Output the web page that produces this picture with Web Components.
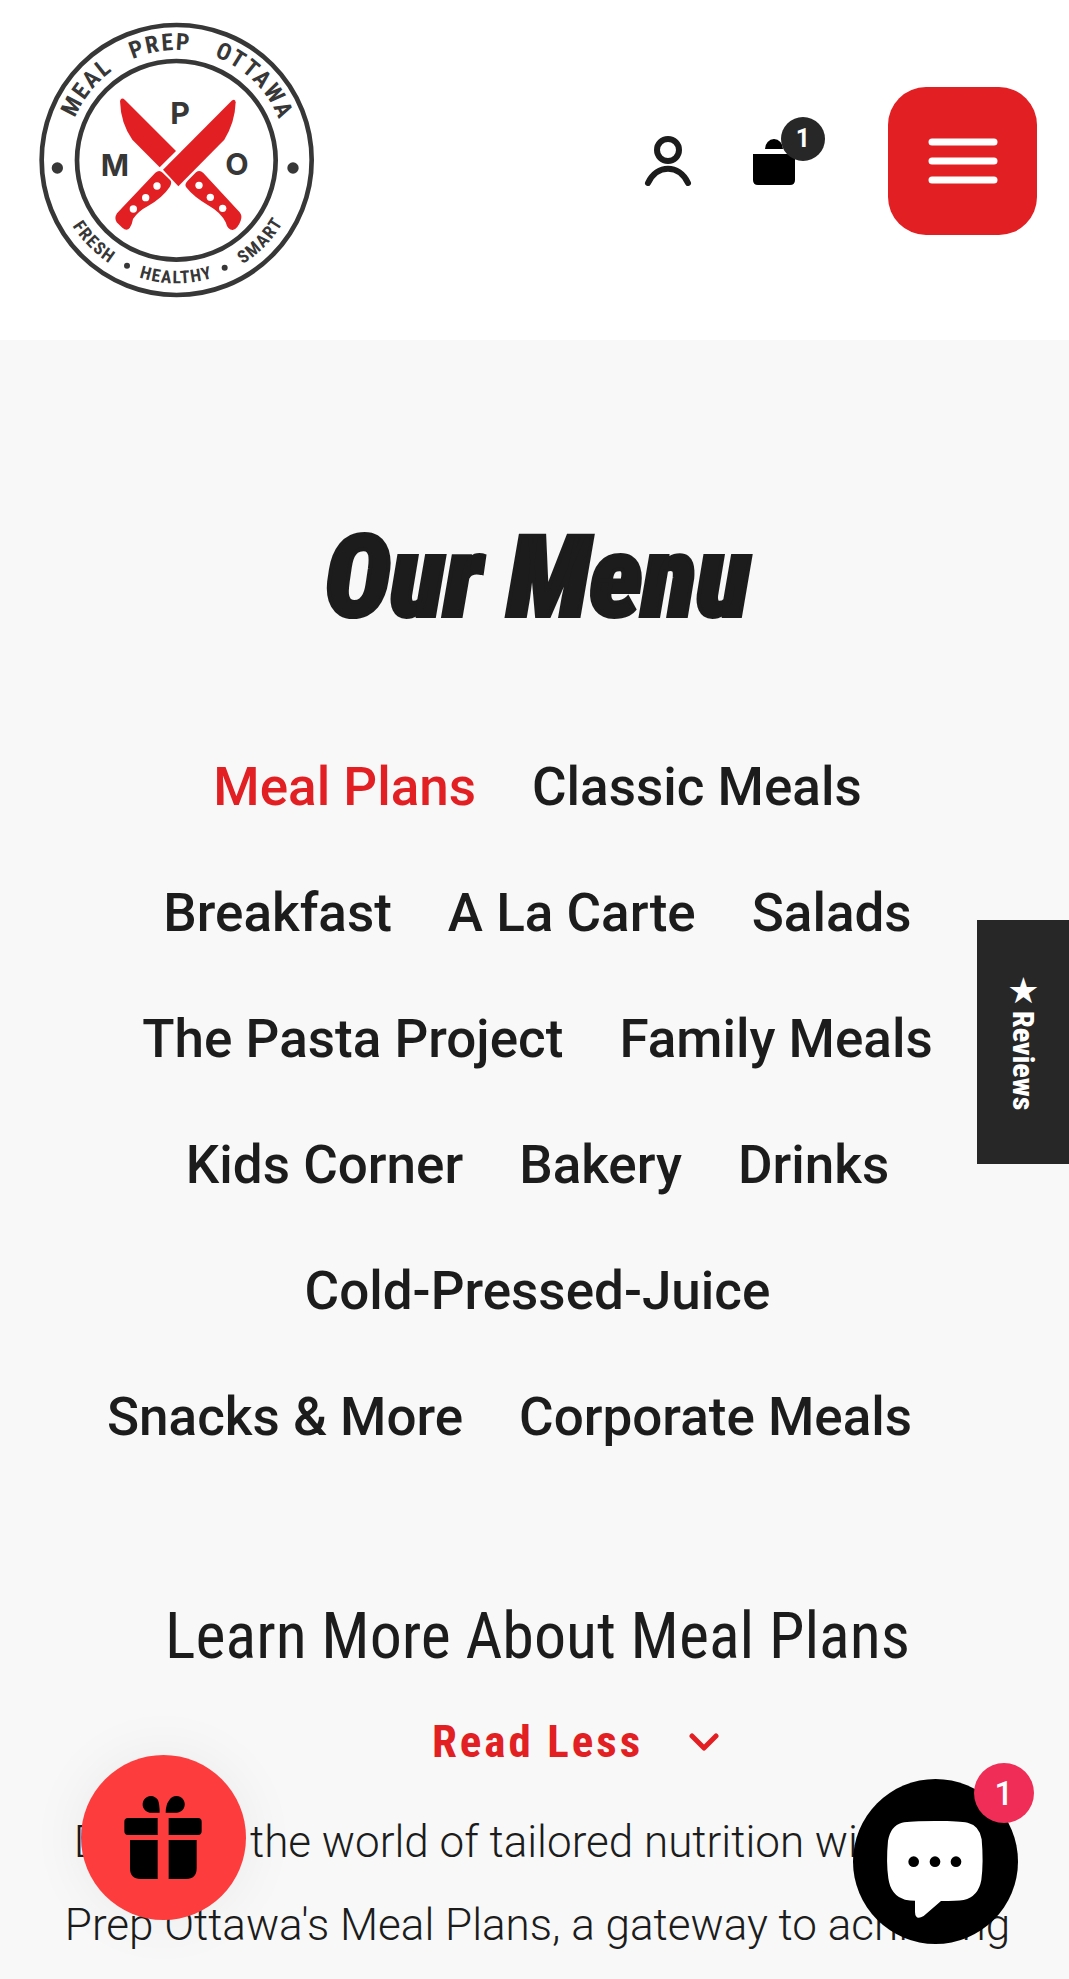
<!DOCTYPE html>
<html lang="en">
<head>
<meta charset="utf-8">
<meta name="viewport" content="width=device-width, initial-scale=1">
<title>Our Menu - Meal Prep Ottawa</title>
<style>
:root{--red:#e21f23;--ink:#1c1c1c;--dark:#272727;--narrow:"Roboto Condensed","Liberation Sans Narrow","Liberation Sans",sans-serif}
body{margin:0;background:#f8f8f8;color:var(--ink);font-family:Roboto,sans-serif}
</style>
</head>
<body>
<menu-page></menu-page>
<script>
const define = (name, html) => {
  const template = document.createElement('template');
  template.innerHTML = '<style>*{box-sizing:border-box}a{color:inherit;text-decoration:none}button{border:0;padding:0;font:inherit;cursor:pointer}svg{display:block}</style>' + html;
  customElements.define(name, class extends HTMLElement {
    constructor() {
      super();
      this.attachShadow({mode: 'open'}).append(template.content.cloneNode(true));
    }
  });
};

define('brand-logo', `
<style>
:host{display:block}
svg{width:295px;height:295px}
text{font-family:var(--narrow);font-weight:700;fill:#373737}
.top{font-size:71px;letter-spacing:6px}
.bottom{font-size:53px;letter-spacing:4px}
.initial{font-family:Inter,sans-serif;font-size:91px}
</style>
<a href="#" aria-label="Meal Prep Ottawa home">
<svg viewBox="0 0 885 885">
<defs>
<path id="up" d="M110 435A330 330 0 0 1 770 435"/>
<path id="down" d="M70 435A370 370 0 0 0 810 435"/>
</defs>
<g fill="none" stroke="#373737" stroke-width="14"><circle cx="440" cy="435" r="405"/><circle cx="439" cy="436" r="298"/></g>
<g fill="#373737"><circle cx="82" cy="459" r="17"/><circle cx="789" cy="459" r="17"/><circle cx="291" cy="752" r="9"/><circle cx="584" cy="758" r="9"/></g>
<g text-anchor="middle">
<text class="top"><textPath href="#up" startOffset="21.5%">MEAL</textPath></text>
<text class="top"><textPath href="#up" startOffset="45.5%">PREP</textPath></text>
<text class="top"><textPath href="#up" startOffset="74.8%">OTTAWA</textPath></text>
<text class="bottom"><textPath href="#down" startOffset="24.9%">FRESH</textPath></text>
<text class="bottom"><textPath href="#down" startOffset="49.9%">HEALTHY</textPath></text>
<text class="bottom"><textPath href="#down" startOffset="75.6%">SMART</textPath></text>
<text class="initial" x="450" y="328">P</text>
<text class="initial" x="255" y="483">M</text>
<text class="initial" x="621" y="480">O</text>
</g>
<g fill="#e21f23">
<path d="M270 258Q274 245 285 255L438 408L389 457L307 374Q272 325 270 258Z"/>
<path d="M399 464L605 257Q616 249 617 262Q615 322 583 374L445 514Z"/>
<path d="M376 473Q388 463 398 473L421 496Q427 503 419 516Q398 548 354 573Q325 588 309 612Q306 630 299 639Q290 650 277 638L260 622Q252 609 261 595Z"/>
<path d="M498 472Q509 463 520 474L629 592Q638 603 632 617Q624 640 608 645Q593 645 587 622Q572 592 538 573Q490 545 468 516Q463 507 473 497Z"/>
</g>
<g fill="#fff"><circle cx="381" cy="513" r="11"/><circle cx="347" cy="548" r="11"/><circle cx="310" cy="582" r="11"/><circle cx="507" cy="511" r="11"/><circle cx="541" cy="547" r="11"/><circle cx="578" cy="580" r="11"/></g>
</svg></a>`);

define('cart-link', `
<style>
:host{display:block}
a{display:block;position:relative}
svg{width:42px;height:48px}
span{position:absolute;left:28px;top:-20px;width:44px;height:44px;border-radius:50%;background:var(--dark);color:#fff;display:grid;place-items:center;font:700 25px Roboto,sans-serif}
</style>
<a href="#" aria-label="Cart">
<svg viewBox="0 0 42 48"><path d="M12 12a9 10 0 0 1 18 0zM0 17h42v26q0 5-5 5H5q-5 0-5-5z"/></svg>
<span><slot></slot></span></a>`);

define('site-header', `
<style>
:host{display:block;background:#fff}
header{display:flex;align-items:center;justify-content:space-between;padding:15px 32px 30px 30px}
.tools{display:flex;align-items:center;margin-bottom:4px}
.account svg{width:48px;height:52px}
cart-link{margin:0 93px 0 61px}
.menu{width:149px;height:148px;border-radius:38px;background:var(--red);display:grid;place-items:center}
.menu svg{width:70px;height:46px}
</style>
<header>
<brand-logo></brand-logo>
<div class="tools">
<a class="account" href="#" aria-label="Account"><svg viewBox="0 0 48 52" fill="none" stroke="#1c1c1c" stroke-width="6" stroke-linecap="round"><circle cx="24" cy="15" r="11"/><path d="M4 48C13 29 35 29 44 48"/></svg></a>
<cart-link>1</cart-link>
<button class="menu" aria-label="Menu"><svg viewBox="0 0 70 46" stroke="#fff" stroke-width="7" stroke-linecap="round"><path d="M4 4h62M4 23h62M4 42h62"/></svg></button>
</div>
</header>`);

define('category-nav', `
<style>
:host{display:block}
ul{list-style:none;margin:0 auto;padding:0;max-width:872px;display:flex;flex-wrap:wrap;justify-content:center;column-gap:56px;row-gap:66px;font-size:53px;line-height:60px;font-weight:500}
.active{color:var(--red)}
</style>
<nav aria-label="Menu categories"><ul>
<li><a class="active" href="#">Meal Plans</a></li><li><a href="#">Classic Meals</a></li>
<li><a href="#">Breakfast</a></li><li><a href="#">A La Carte</a></li><li><a href="#">Salads</a></li>
<li><a href="#">The Pasta Project</a></li><li><a href="#">Family Meals</a></li>
<li><a href="#">Kids Corner</a></li><li><a href="#">Bakery</a></li><li><a href="#">Drinks</a></li>
<li><a href="#">Cold-Pressed-Juice</a></li>
<li><a href="#">Snacks &amp; More</a></li><li><a href="#">Corporate Meals</a></li><li></li>
</ul></nav>`);

define('learn-more', `
<style>
:host{display:block;text-align:center}
h2{margin:0;font:400 64px/80px var(--narrow)}
button{display:flex;align-items:center;gap:46px;margin:37px auto 0;padding-left:76px;background:none;color:var(--red);font:700 45px/56px var(--narrow);letter-spacing:3px}
button svg{width:30px;height:20px}
p{margin:31px 0 0;font-size:44px;line-height:83px;font-weight:300}
</style>
<h2><slot name="title"></slot></h2>
<button aria-expanded="true">Read Less <svg viewBox="0 0 30 20" fill="none" stroke="currentColor" stroke-width="5" stroke-linecap="round" stroke-linejoin="round"><path d="M3 4l12 12L27 4"/></svg></button>
<p><slot></slot></p>`);

define('reviews-tab', `
<style>
:host{display:block;position:fixed;right:0;top:920px}
button{width:92px;height:244px;background:var(--dark);color:#fff;display:flex;align-items:center;justify-content:center;padding-bottom:4px;writing-mode:vertical-rl;font:800 30px/36px var(--narrow)}
span{font:36px/36px "DejaVu Sans",sans-serif}
</style>
<button><span>★</span><slot></slot></button>`);

define('gift-button', `
<style>
:host{display:block;position:fixed;left:81px;bottom:59px}
button{display:block;width:165px;height:165px;border-radius:50%;background:#fd3c3d;box-shadow:0 0 60px rgba(0,0,0,.06)}
svg{width:100%;height:100%}
</style>
<button aria-label="Rewards"><svg viewBox="64 105 495 495">
<path d="M300 278H270a25 25 0 1 1 25-38q5 14 5 38zM318 278h34a25 25 0 1 0-23-38q-11 14-11 38zM294 294v51H205q-11 0-11-11V305q0-11 11-11zM327 294h88q11 0 11 11v29q0 11-11 11H327zM211 360h83v117H243q-32 0-32-32zM327 360h84v85q0 32-32 32H327z"/></svg></button>`);

define('chat-button', `
<style>
:host{display:block;position:fixed;right:51px;bottom:35px}
button{display:block;width:165px;height:165px;border-radius:50%;background:#000}
svg{width:100%;height:100%}
span{position:absolute;right:-16px;top:-16px;width:60px;height:60px;border-radius:50%;background:#ef2d56;color:#fff;display:grid;place-items:center;font:500 33px Roboto,sans-serif}
</style>
<button aria-label="Chat"><svg viewBox="879 177 495 495">
<path fill="#fff" d="M1125 303C1180 303 1205 305 1223 308Q1259 317 1265 358Q1271 425 1264 480Q1255 530 1211 540Q1190 543 1143 543L1091 588Q1066 603 1065 576V542Q1050 542 1035 539Q992 527 985 475Q978 425 984 362Q992 317 1026 308Q1050 303 1125 303Z"/>
<circle cx="1061" cy="425" r="16"/><circle cx="1125" cy="425" r="16"/><circle cx="1188" cy="425" r="16"/></svg></button>
<span><slot></slot></span>`);

define('menu-page', `
<style>
:host{display:block}
main{padding:171px 30px 0 36px}
h1{margin:0 0 112px;text-align:center;font:italic 900 112px/134px var(--narrow);-webkit-text-stroke:4px var(--ink)}
learn-more{margin-top:150px}
</style>
<site-header></site-header>
<main>
<h1>Our Menu</h1>
<category-nav></category-nav>
<learn-more><span slot="title">Learn More About Meal Plans</span>Dive into the world of tailored nutrition with Meal Prep Ottawa's Meal Plans, a gateway to achieving</learn-more>
</main>
<reviews-tab>Reviews</reviews-tab>
<gift-button></gift-button>
<chat-button>1</chat-button>`);
</script>
</body>
</html>
